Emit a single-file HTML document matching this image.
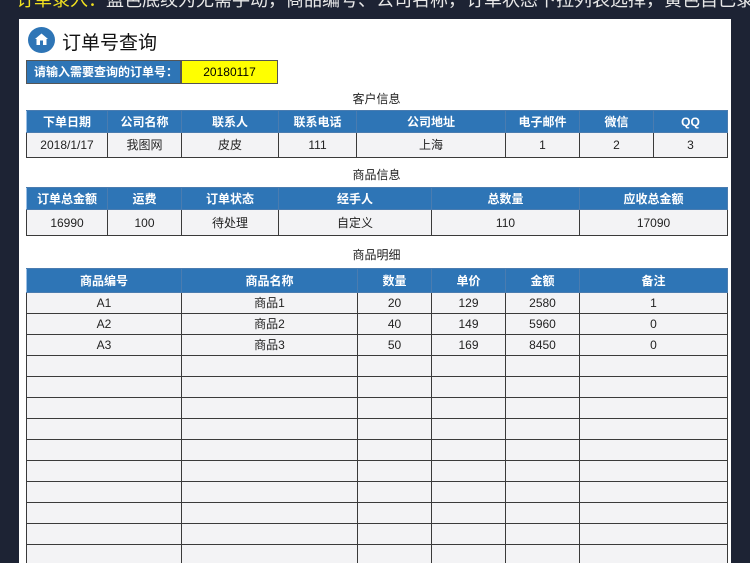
<!DOCTYPE html>
<html><head><meta charset="utf-8"><style>
*{margin:0;padding:0;box-sizing:border-box}
html,body{width:750px;height:563px;overflow:hidden}
body{background:#1d2334;font-family:"Liberation Sans","Noto Sans CJK SC",sans-serif;position:relative}
.top{position:absolute;left:16px;top:-14px;font-size:18px;color:#e8e8e8;white-space:nowrap}
.top b{color:#f0e020;font-weight:normal}
.panel{position:absolute;left:19px;top:19px;width:712px;height:560px;background:#fff}
.abs{position:absolute}
table{position:absolute;left:26px;border-collapse:collapse;table-layout:fixed;font-size:12px;color:#222}
td{border:1px solid #3a3a3a;text-align:center;background:#f3f3f5;padding:0;overflow:hidden;white-space:nowrap;line-height:14px}
tr.h td{background:#2e75b6;color:#fff;font-weight:bold;border-color:#4a7cb0;border-left-color:#9cc0e6}
.cap{position:absolute;left:26px;width:701px;text-align:center;font-size:12px;color:#222}
</style></head><body>
<div class="top"><b>订单录入：</b>蓝色底纹为无需手动，商品编号、公司名称，订单状态下拉列表选择，黄色自己录入</div>
<div class="panel"></div>
<div class="abs" style="left:28px;top:27px;width:27px;height:26px;border-radius:50%;background:#2e75b6"></div>
<svg class="abs" style="left:32px;top:30px" width="19" height="19" viewBox="0 0 19 19"><path d="M3 9 L9.5 3.5 L16 9 L14.5 9 L14.5 15 L4.5 15 L4.5 9 Z" fill="#fff"/><rect x="8" y="10.5" width="3" height="4.5" fill="#2e75b6"/></svg>
<div class="abs" style="left:62px;top:28px;font-size:19px;color:#111">订单号查询</div>
<div class="abs" style="left:26px;top:60px;width:155px;height:24px;background:#2e75b6;border:1px solid #555;color:#fff;font-weight:bold;font-size:12px;line-height:22px;padding-left:7px">请输入需要查询的订单号：</div>
<div class="abs" style="left:181px;top:60px;width:97px;height:24px;background:#ffff00;border:1px solid #555;font-size:12px;line-height:22px;text-align:center">20180117</div>

<div class="cap" style="top:90px">客户信息</div>
<table style="top:110px;width:701px">
<colgroup><col style="width:81px"><col style="width:74px"><col style="width:97px"><col style="width:78px"><col style="width:149px"><col style="width:74px"><col style="width:74px"><col style="width:74px"></colgroup>
<tr class="h" style="height:22px"><td>下单日期</td><td>公司名称</td><td>联系人</td><td>联系电话</td><td>公司地址</td><td>电子邮件</td><td>微信</td><td>QQ</td></tr>
<tr style="height:25px"><td>2018/1/17</td><td>我图网</td><td>皮皮</td><td>111</td><td>上海</td><td>1</td><td>2</td><td>3</td></tr>
</table>

<div class="cap" style="top:166px">商品信息</div>
<table style="top:187px;width:701px">
<colgroup><col style="width:81px"><col style="width:74px"><col style="width:97px"><col style="width:153px"><col style="width:148px"><col style="width:148px"></colgroup>
<tr class="h" style="height:22px"><td>订单总金额</td><td>运费</td><td>订单状态</td><td>经手人</td><td>总数量</td><td>应收总金额</td></tr>
<tr style="height:26px"><td>16990</td><td>100</td><td>待处理</td><td>自定义</td><td>110</td><td>17090</td></tr>
</table>

<div class="cap" style="top:246px">商品明细</div>
<table style="top:268px;width:701px">
<colgroup><col style="width:155px"><col style="width:176px"><col style="width:74px"><col style="width:74px"><col style="width:74px"><col style="width:148px"></colgroup>
<tr class="h" style="height:24px"><td>商品编号</td><td>商品名称</td><td>数量</td><td>单价</td><td>金额</td><td>备注</td></tr>
<tr style="height:21px"><td>A1</td><td>商品1</td><td>20</td><td>129</td><td>2580</td><td>1</td></tr>
<tr style="height:21px"><td>A2</td><td>商品2</td><td>40</td><td>149</td><td>5960</td><td>0</td></tr>
<tr style="height:21px"><td>A3</td><td>商品3</td><td>50</td><td>169</td><td>8450</td><td>0</td></tr>
<tr style="height:21px"><td></td><td></td><td></td><td></td><td></td><td></td></tr>
<tr style="height:21px"><td></td><td></td><td></td><td></td><td></td><td></td></tr>
<tr style="height:21px"><td></td><td></td><td></td><td></td><td></td><td></td></tr>
<tr style="height:21px"><td></td><td></td><td></td><td></td><td></td><td></td></tr>
<tr style="height:21px"><td></td><td></td><td></td><td></td><td></td><td></td></tr>
<tr style="height:21px"><td></td><td></td><td></td><td></td><td></td><td></td></tr>
<tr style="height:21px"><td></td><td></td><td></td><td></td><td></td><td></td></tr>
<tr style="height:21px"><td></td><td></td><td></td><td></td><td></td><td></td></tr>
<tr style="height:21px"><td></td><td></td><td></td><td></td><td></td><td></td></tr>
<tr style="height:21px"><td></td><td></td><td></td><td></td><td></td><td></td></tr>
</table>
</body></html>
